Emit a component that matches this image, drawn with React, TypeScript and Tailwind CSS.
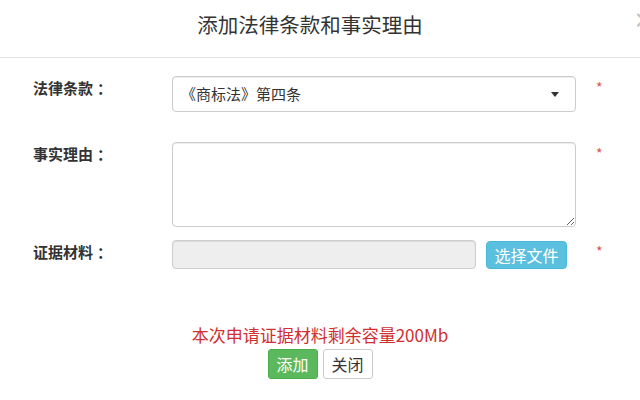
import React from "react";

function Star() {
  return (
    <span className="ml-[20px] pt-[4px] text-[14px] leading-[14px] text-[#d9534f]">*</span>
  );
}

function Label({ text }: { text: string }) {
  return (
    <div className="w-[172px] shrink-0 pl-[33px] pt-[2px] text-[15px] leading-[20px] font-bold text-[#333]">
      {text}
      <span className="ml-[4px]">：</span>
    </div>
  );
}

export default function App() {
  return (
    <div className="w-[640px] h-[400px] overflow-hidden bg-white text-[#333] font-['Noto_Sans_CJK_SC','Noto_Sans',sans-serif]">
      <div className="h-[58px] border-b border-[#e5e5e5] flex items-start">
        <div className="flex-1 text-center pt-[10px] text-[20.5px] leading-[28px] text-[#333]">
          添加法律条款和事实理由
        </div>
        <div className="w-[20px] pt-[6px] pl-[13px] text-[21px] leading-[26px] font-bold text-[#c4c4c4] whitespace-nowrap">
          ×
        </div>
      </div>

      <div className="pt-[18px]">
        <div className="flex items-start">
          <Label text="法律条款" />
          <div className="w-[404px] h-[36px] border border-[#ccc] rounded-[4px] shadow-[inset_0_1px_1px_rgba(0,0,0,0.075)] flex items-center justify-between pl-[8px] pr-[16px]">
            <span className="text-[15px] leading-[20px] text-[#333]">《商标法》第四条</span>
            <span className="w-0 h-0 border-l-[4px] border-r-[4px] border-t-[5px] border-l-transparent border-r-transparent border-t-[#333]"></span>
          </div>
          <Star />
        </div>

        <div className="flex items-start mt-[30px]">
          <Label text="事实理由" />
          <textarea className="block w-[404px] h-[85px] border border-[#ccc] rounded-[4px] shadow-[inset_0_1px_1px_rgba(0,0,0,0.075)] outline-none" />
          <Star />
        </div>

        <div className="flex items-start mt-[13px]">
          <Label text="证据材料" />
          <div className="w-[404px] flex items-start">
            <div className="w-[304px] h-[29px] border border-[#ccc] rounded-[4px] bg-[#eee] shadow-[inset_0_1px_1px_rgba(0,0,0,0.075)]"></div>
            <div className="ml-[10px] mt-[1px] w-[81px] h-[28px] rounded-[4px] bg-[#5bc0de] border border-[#46b8da] text-white text-[16px] leading-[26px] text-center">
              选择文件
            </div>
          </div>
          <Star />
        </div>

        <div className="mt-[54px] text-center text-[17px] leading-[24px] text-[#cf2f2f]">
          本次申请证据材料剩余容量200Mb
        </div>
        <div className="mt-[2px] flex justify-center gap-[5px]">
          <div className="w-[50px] h-[30px] rounded-[3px] bg-[#5cb85c] border border-[#4cae4c] text-white text-[16px] leading-[28px] text-center">
            添加
          </div>
          <div className="w-[50px] h-[30px] rounded-[3px] bg-white border border-[#ccc] text-[#333] text-[16px] leading-[28px] text-center">
            关闭
          </div>
        </div>
      </div>
    </div>
  );
}
